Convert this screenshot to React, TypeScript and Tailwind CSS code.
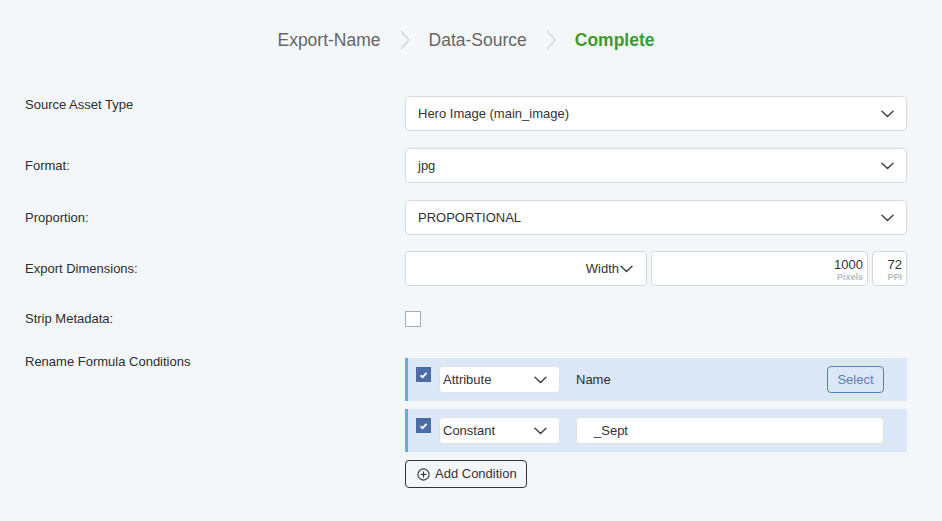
import React from "react";

const Chevron = ({ className = "" }: { className?: string }) => (
  <svg width="13" height="8" viewBox="0 0 13 8" className={className} fill="none">
    <polyline points="1,1.2 6.5,6.5 12,1.2" stroke="#444" strokeWidth="1.5" strokeLinecap="round" strokeLinejoin="round" />
  </svg>
);

const Crumb = () => (
  <svg width="12" height="20" viewBox="0 0 12 20" fill="none" className="mx-[18px]">
    <polyline points="2,1 10,10 2,19" stroke="#d2d4d6" strokeWidth="1.3" />
  </svg>
);

const Check = () => (
  <div className="w-[15px] h-[15px] bg-[#4b6ca6] flex items-center justify-center mt-[1px] shrink-0">
    <svg width="9" height="8" viewBox="0 0 9 8">
      <polyline points="1.5,4.3 3.6,6.2 7.5,1.8" fill="none" stroke="#fff" strokeWidth="1.8" />
    </svg>
  </div>
);

const Select = ({ text }: { text: string }) => (
  <div className="w-[502px] h-[35px] bg-white border border-[#d5d9de] rounded-[4px] flex items-center justify-between pl-[12px] pr-[12px] text-[13px] text-[#333]">
    <span>{text}</span>
    <Chevron />
  </div>
);

const Label = ({ children, className = "" }: { children: React.ReactNode; className?: string }) => (
  <div className={"w-[380px] shrink-0 text-[13px] leading-[16px] text-[#2d2d2d] " + className}>{children}</div>
);

const SmallSelect = ({ text }: { text: string }) => (
  <div className="w-[121px] h-[27px] bg-white border border-[#dfe3e8] rounded-[4px] flex items-center justify-between pl-[3px] pr-[12px] text-[13px] text-[#333] shrink-0">
    <span>{text}</span>
    <Chevron />
  </div>
);

export default function App() {
  return (
    <div className="w-full min-h-[521px] bg-[#f4f7fa] font-['Liberation_Sans',Arial,sans-serif]">
      <div className="h-[96px] pt-[28px] flex justify-center pr-[10px]">
        <div className="flex items-center h-[24px] text-[17.5px]">
          <span className="text-[#666]">Export-Name</span>
          <Crumb />
          <span className="text-[#666]">Data-Source</span>
          <Crumb />
          <span className="text-[#3c9a2f] font-bold">Complete</span>
        </div>
      </div>

      <div className="pl-[25px]">
        <div className="flex items-start h-[35px]">
          <Label className="pt-[1px]">Source Asset Type</Label>
          <Select text="Hero Image (main_image)" />
        </div>

        <div className="flex items-center h-[35px] mt-[17px]">
          <Label>Format:</Label>
          <Select text="jpg" />
        </div>

        <div className="flex items-center h-[35px] mt-[17px]">
          <Label>Proportion:</Label>
          <Select text="PROPORTIONAL" />
        </div>

        <div className="flex items-center h-[35px] mt-[16px]">
          <Label>Export Dimensions:</Label>
          <div className="flex gap-[4px]">
            <div className="w-[242px] h-[35px] bg-white border border-[#d5d9de] rounded-[4px] flex items-center justify-end pr-[13px] text-[13px] text-[#333]">
              <span>Width</span>
              <Chevron className="ml-[1px]" />
            </div>
            <div className="w-[217px] h-[35px] bg-white border border-[#d5d9de] rounded-[4px] flex flex-col items-end pr-[4px] pt-[6px]">
              <span className="text-[13px] leading-[14px] text-[#333]">1000</span>
              <span className="text-[9px] leading-[11px] font-bold text-[#b9bcbf]">Pixels</span>
            </div>
            <div className="w-[35px] h-[35px] bg-white border border-[#d5d9de] rounded-[4px] flex flex-col items-end pr-[4px] pt-[6px]">
              <span className="text-[13px] leading-[14px] text-[#333]">72</span>
              <span className="text-[9px] leading-[11px] font-bold text-[#b9bcbf]">PPI</span>
            </div>
          </div>
        </div>

        <div className="flex items-center h-[16px] mt-[25px]">
          <Label>Strip Metadata:</Label>
          <div className="w-[16px] h-[16px] bg-white border border-[#a9adb2]" />
        </div>

        <div className="flex items-start mt-[31px]">
          <Label className="-mt-[4px]">Rename Formula Conditions</Label>
          <div className="w-[502px] flex flex-col gap-[8px]">
            <div className="h-[43px] bg-[#dbe7f6] border-l-[3px] border-[#5aaee2] flex items-start pt-[8px] pl-[8px] pr-[23px]">
              <Check />
              <div className="ml-[8px]"><SmallSelect text="Attribute" /></div>
              <span className="ml-[16px] text-[13px] leading-[27px] text-[#2d2d2d] flex-1">Name</span>
              <div className="w-[57px] h-[27px] border border-[#5b7ebb] rounded-[4px] flex items-center justify-center text-[13px] text-[#5b7ebb]">Select</div>
            </div>
            <div className="h-[43px] bg-[#dbe7f6] border-l-[3px] border-[#5aaee2] flex items-start pt-[8px] pl-[8px] pr-[23px]">
              <Check />
              <div className="ml-[8px]"><SmallSelect text="Constant" /></div>
              <div className="ml-[16px] flex-1 h-[27px] bg-white border border-[#dfe3e8] rounded-[4px] flex items-center pl-[17px] text-[13px] text-[#333]">_Sept</div>
            </div>
            <div>
              <div className="inline-flex items-center h-[28px] w-[122px] border border-[#333] rounded-[4px] pl-[11px] text-[13px] text-[#333]">
                <svg width="13" height="13" viewBox="0 0 13 13" fill="none" className="mr-[5px]">
                  <circle cx="6.5" cy="6.5" r="5.6" stroke="#333" strokeWidth="1.1" />
                  <line x1="6.5" y1="3.5" x2="6.5" y2="9.5" stroke="#333" strokeWidth="1.1" />
                  <line x1="3.5" y1="6.5" x2="9.5" y2="6.5" stroke="#333" strokeWidth="1.1" />
                </svg>
                Add Condition
              </div>
            </div>
          </div>
        </div>
      </div>
    </div>
  );
}
